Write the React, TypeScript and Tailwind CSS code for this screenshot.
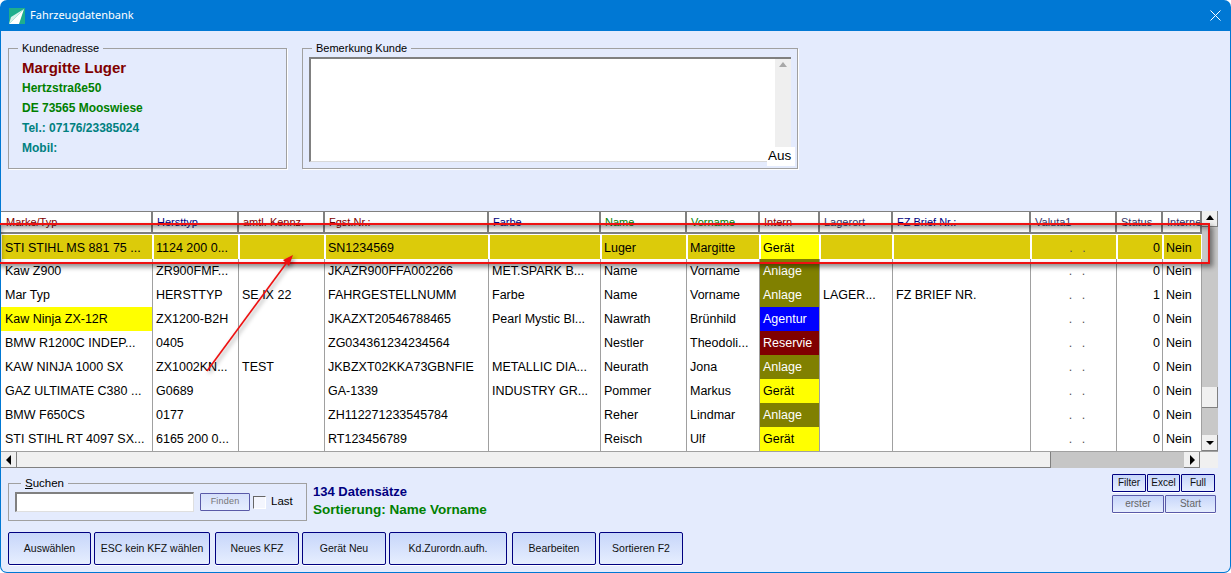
const cols = "grid grid-cols-[152px_86px_86px_164px_112px_86px_73px_60px_73px_138px_86px_46px_39px]";

const headers: [string, string][] = [
  ["Marke/Typ", "text-[#800000] pl-[5px]"],
  ["Hersttyp", "text-[#000080] pl-[4px]"],
  ["amtl. Kennz.", "text-[#800000] pl-[4px]"],
  ["Fgst.Nr.:", "text-[#800000] pl-[4px]"],
  ["Farbe", "text-[#000080] pl-[4px]"],
  ["Name", "text-[#008000] pl-[4px]"],
  ["Vorname", "text-[#008000] pl-[4px]"],
  ["Intern", "text-[#800000] pl-[4px]"],
  ["Lagerort", "text-[#333366] pl-[4px]"],
  ["FZ Brief Nr.:", "text-[#000080] pl-[4px]"],
  ["Valuta1", "text-[#333366] pl-[4px]"],
  ["Status", "text-[#333366] pl-[4px]"],
  ["Interne", "text-[#333366] pl-[4px]"],
];

const rows: string[][] = [
  ["STI STIHL MS 881 75 ...", "1124 200 0...", "", "SN1234569", "", "Luger", "Margitte", "Gerät", "", "", "0", "Nein"],
  ["Kaw Z900", "ZR900FMF...", "", "JKAZR900FFA002266", "MET.SPARK B...", "Name", "Vorname", "Anlage", "", "", "0", "Nein"],
  ["Mar Typ", "HERSTTYP", "SE IX 22", "FAHRGESTELLNUMM", "Farbe", "Name", "Vorname", "Anlage", "LAGER...", "FZ BRIEF NR.", "1", "Nein"],
  ["Kaw Ninja ZX-12R", "ZX1200-B2H", "", "JKAZXT20546788465", "Pearl Mystic Bl...", "Nawrath", "Brünhild", "Agentur", "", "", "0", "Nein"],
  ["BMW R1200C INDEP...", "0405", "", "ZG034361234234564", "", "Nestler", "Theodoli...", "Reservie", "", "", "0", "Nein"],
  ["KAW NINJA 1000 SX", "ZX1002KN...", "TEST", "JKBZXT02KKA73GBNFIE", "METALLIC DIA...", "Neurath", "Jona", "Anlage", "", "", "0", "Nein"],
  ["GAZ ULTIMATE C380 ...", "G0689", "", "GA-1339", "INDUSTRY GR...", "Pommer", "Markus", "Gerät", "", "", "0", "Nein"],
  ["BMW F650CS", "0177", "", "ZH112271233545784", "", "Reher", "Lindmar", "Anlage", "", "", "0", "Nein"],
  ["STI STIHL RT 4097 SX...", "6165 200 0...", "", "RT123456789", "", "Reisch", "Ulf", "Gerät", "", "", "0", "Nein"],
];

function internClass(v: string) {
  if (v === "Gerät") return "bg-[#ffff00] text-black";
  if (v === "Anlage") return "bg-[#808000] text-white";
  if (v === "Agentur") return "bg-[#0000ff] text-white";
  return "bg-[#800000] text-white";
}

function Cell({ text, selected, first = false, className = "" }: { text: string; selected: boolean; first?: boolean; className?: string }) {
  const pad = selected ? (first ? "pl-[3px]" : "pl-[2px]") : first ? "pl-[4px]" : "pl-[3px]";
  return (
    <div className={`${selected ? "h-[25px] border-t border-white" : "h-6"} border-r border-[#a0a0a0] min-w-0 overflow-hidden`}>
      <div
        className={`${selected ? "h-6 border-l border-white leading-[26px]" : "h-6 leading-[25px]"} ${pad} pr-[2px] whitespace-nowrap overflow-hidden ${selected && !className.includes("bg-") ? "bg-[#dccb0a]" : ""} ${className}`}
      >
        {text}
      </div>
    </div>
  );
}

function Row({ r, i }: { r: string[]; i: number }) {
  const sel = i === 0;
  return (
    <div className={`${cols} ${sel ? "h-[25px]" : "h-6"} bg-white`}>
      <Cell text={r[0]} selected={sel} first className={i === 3 ? "bg-[#ffff00]" : ""} />
      <Cell text={r[1]} selected={sel} />
      <Cell text={r[2]} selected={sel} />
      <Cell text={r[3]} selected={sel} />
      <Cell text={r[4]} selected={sel} />
      <Cell text={r[5]} selected={sel} />
      <Cell text={r[6]} selected={sel} />
      <Cell text={r[7]} selected={sel} className={internClass(r[7])} />
      <Cell text={r[8]} selected={sel} />
      <Cell text={r[9]} selected={sel} />
      <Cell text=". ." selected={sel} className="text-center tracking-[3px] text-[#555] !pl-[12px]" />
      <Cell text={r[10]} selected={sel} className="text-right" />
      <Cell text={r[11]} selected={sel} />
    </div>
  );
}

function Triangle({ dir, fill = "#000" }: { dir: "up" | "down" | "left" | "right"; fill?: string }) {
  const pts = {
    up: "1,6 9,6 5,1",
    down: "1,3 9,3 5,7",
    left: "7,0 7,10 2,5",
    right: "3,0 3,10 8,5",
  }[dir];
  return (
    <svg width="10" height="10" viewBox="0 0 10 10">
      <polygon points={pts} fill={fill} />
    </svg>
  );
}

function SBtn({ dir }: { dir: "up" | "down" | "left" | "right" }) {
  return (
    <div className="w-4 h-4 shrink-0 flex items-center justify-center bg-[#f0f0f0] border-r border-b border-[#808080]">
      <Triangle dir={dir} />
    </div>
  );
}

function BigBtn({ label, w }: { label: string; w: string }) {
  return (
    <button
      className={`${w} h-[33px] rounded-[2px] border border-[#000080] bg-gradient-to-b from-[#c7d6fa] to-[#e6eefe] text-[10.5px] text-[#111] shadow-[0_1px_0_#fff]`}
    >
      {label}
    </button>
  );
}

function SmallBtn({ label, w, disabled }: { label: string; w: string; disabled?: boolean }) {
  return (
    <button
      className={`${w} h-[18px] rounded-[1px] border ${disabled ? "border-[#5a5aa8] text-[#666]" : "border-[#000080] text-[#111]"} bg-gradient-to-b from-[#c7d6fa] to-[#e6eefe] text-[10px] leading-none shadow-[0_1px_0_#fff]`}
    >
      {label}
    </button>
  );
}

export default function App() {
  return (
    <div className="relative w-[1231px] h-[573px] overflow-hidden bg-white font-['Liberation_Sans',Arial,sans-serif]">
      <div className="w-full h-full flex flex-col bg-[#0078d4] rounded-[7px] overflow-hidden">
        {/* Title bar */}
        <div className="h-[31px] shrink-0 flex items-center pl-[9px] pr-[9px] text-white">
          <svg width="16" height="16" viewBox="0 0 16 16" className="shrink-0">
            <rect width="16" height="16" fill="#1fae8c" />
            <path d="M0 16 L15 1 L10 16 Z" fill="#ffffff" />
            <path d="M0 16 L15 1 L2 9 Z" fill="#d6f2ea" />
          </svg>
          <span className="ml-[5px] text-[11px] font-['Noto_Sans',sans-serif]">Fahrzeugdatenbank</span>
          <svg width="11" height="11" viewBox="0 0 11 11" className="ml-auto mr-[1px]">
            <path d="M0.5 0.5 L10.5 10.5 M10.5 0.5 L0.5 10.5" stroke="#fff" strokeWidth="1" fill="none" />
          </svg>
        </div>

        {/* Body */}
        <div className="flex-1 mx-px mb-px bg-[#e4ebfd] rounded-b-[6px] flex flex-col min-h-0 overflow-hidden">
          {/* Top boxes */}
          <div className="flex mt-[11px] pl-[7px] h-[127px] shrink-0">
            <fieldset className="w-[279px] border border-[#a0a0a0] shadow-[1px_1px_0_#fff] pl-[13px] m-0 p-0 h-[127px]">
              <legend className="-ml-[4px] px-[4px] text-[11px] leading-[13px] text-black">Kundenadresse</legend>
              <div className="font-bold text-[15px] leading-[20px] mt-[3px] text-[#800000]">Margitte Luger</div>
              <div className="font-bold text-[12px] leading-[20px] text-[#008000]">Hertzstraße50</div>
              <div className="font-bold text-[12px] leading-[20px] text-[#008000]">DE 73565 Mooswiese</div>
              <div className="font-bold text-[12px] leading-[20px] text-[#008080]">Tel.: 07176/23385024</div>
              <div className="font-bold text-[12px] leading-[20px] text-[#008080]">Mobil:</div>
            </fieldset>
            <fieldset className="relative ml-[15px] w-[496px] border border-[#a0a0a0] shadow-[1px_1px_0_#fff] m-0 p-0 h-[127px]">
              <legend className="ml-[9px] px-[4px] text-[11px] leading-[13px] text-black">Bemerkung Kunde</legend>
              <div className="mx-[6px] mt-[2px] h-[105px] w-[482px] flex bg-white border-t-2 border-l-2 border-[#808080] border-b border-b-[#d8d8d8]">
                <div className="flex-1" />
                <div className="w-[16px] bg-[#efefef] flex justify-center pt-[2px]">
                  <Triangle dir="up" fill="#a8a8a8" />
                </div>
              </div>
              <div className="absolute right-[2px] bottom-[2px] w-[28px] bg-white pl-[1px] pb-[2px] text-[13.5px] leading-[17px] text-black">Aus</div>
            </fieldset>
          </div>

          {/* Table */}
          <div className="mt-[42px] h-[257px] w-[1217px] shrink-0 flex flex-col text-[12.5px] text-black bg-white">
            <div className="h-[240px] shrink-0 flex">
              <div className="w-[1201px] overflow-hidden">
                <div className={`${cols} h-[23px] bg-white`}>
                  {headers.map(([h, c]) => (
                    <div
                      key={h}
                      className={`h-[23px] border-t border-t-[#808080] border-b-2 border-b-[#808080] border-r-2 border-r-[#808080] text-[11px] leading-[20px] whitespace-nowrap overflow-hidden ${c}`}
                    >
                      {h}
                    </div>
                  ))}
                </div>
                {rows.map((r, i) => (
                  <Row key={i} r={r} i={i} />
                ))}
              </div>
              <div className="w-4 shrink-0 flex flex-col bg-[#c8c8c8]">
                <SBtn dir="up" />
                <div className="flex-1" />
                <div className="h-[21px] bg-[#f0f0f0] border-r border-b border-[#808080]" />
                <div className="h-[27px]" />
                <SBtn dir="down" />
              </div>
            </div>
            <div className="h-[17px] flex bg-[#f0f0f0] border-t border-[#a0a0a0]">
              <SBtn dir="left" />
              <div className="w-[1034px] border-r border-b border-[#808080]" />
              <div className="w-[133px] bg-[#c6c6c6]" />
              <SBtn dir="right" />
              <div className="w-4 bg-[#f0f0f0]" />
            </div>
          </div>

          {/* Bottom area */}
          <div className="flex flex-1 min-h-0 relative">
            <div className="flex-1 flex flex-col pl-[7px]">
              <div className="flex mt-[7px] h-[46px]">
                <fieldset className="w-[299px] h-[46px] border border-[#a0a0a0] m-0 p-0 pl-[6px] flex">
                  <legend className="ml-[6px] px-[4px] text-[11.5px] leading-[16px] text-black">
                    <span className="underline">S</span>uchen
                  </legend>
                  <div className="flex items-center h-[20px] mt-[1px]">
                    <div className="w-[179px] h-[20px] bg-white border-t-2 border-l-2 border-[#808080] border-b border-r border-b-[#dfdfdf] border-r-[#dfdfdf]" />
                    <button className="ml-[6px] w-[50px] h-[18px] border border-[#5a5aa8] rounded-[1px] bg-gradient-to-b from-[#d6e0fb] to-[#e6eefe] text-[9px] text-[#777] tracking-[0.2px]">
                      Finden
                    </button>
                    <div className="ml-[3px] w-[13px] h-[13px] bg-[#f4f6fe] border-t border-l border-[#666] border-r border-b border-r-white border-b-white" />
                    <span className="ml-[5px] text-[11.5px] text-black">Last</span>
                  </div>
                </fieldset>
                <div className="ml-[6px] mt-[8px] font-bold">
                  <div className="text-[13px] leading-[18px] text-[#000080]">134 Datensätze</div>
                  <div className="text-[13.5px] leading-[18px] text-[#008000]">Sortierung: Name Vorname</div>
                </div>
              </div>
              <div className="flex mt-[11px]">
                <BigBtn label="Auswählen" w="w-[83px] mr-[3px]" />
                <BigBtn label="ESC kein KFZ wählen" w="w-[116px] mr-[5px]" />
                <BigBtn label="Neues KFZ" w="w-[84px] mr-[3px]" />
                <BigBtn label="Gerät Neu" w="w-[84px] mr-[3px]" />
                <BigBtn label="Kd.Zurordn.aufh." w="w-[118px] mr-[5px]" />
                <BigBtn label="Bearbeiten" w="w-[84px] mr-[3px]" />
                <BigBtn label="Sortieren F2" w="w-[84px]" />
              </div>
            </div>
            <div className="w-[119px] shrink-0 pt-[6px] pl-[1px]">
              <div className="flex gap-[1px]">
                <SmallBtn label="Filter" w="w-[34px]" />
                <SmallBtn label="Excel" w="w-[33px]" />
                <SmallBtn label="Full" w="w-[34px]" />
              </div>
              <div className="flex gap-[1px] mt-[3px]">
                <SmallBtn label="erster" w="w-[52px]" disabled />
                <SmallBtn label="Start" w="w-[51px]" disabled />
              </div>
            </div>
          </div>
        </div>
      </div>

      {/* Red annotation overlay */}
      <div className="absolute left-[-4px] top-[223px] w-[1214px] h-[41px] border-2 border-[#ee1111] pointer-events-none shadow-[3px_3px_5px_rgba(0,0,0,0.45),inset_3px_3px_5px_rgba(0,0,0,0.4)]" />
      <svg
        width="1231"
        height="573"
        viewBox="0 0 1231 573"
        className="absolute left-0 top-0 pointer-events-none drop-shadow-[2px_2px_2px_rgba(0,0,0,0.4)]"
      >
        <line x1="207" y1="371" x2="288" y2="261" stroke="#ee1111" strokeWidth="1.6" />
        <polygon points="293,255 283,260 289,266" fill="#ee1111" />
      </svg>
    </div>
  );
}
